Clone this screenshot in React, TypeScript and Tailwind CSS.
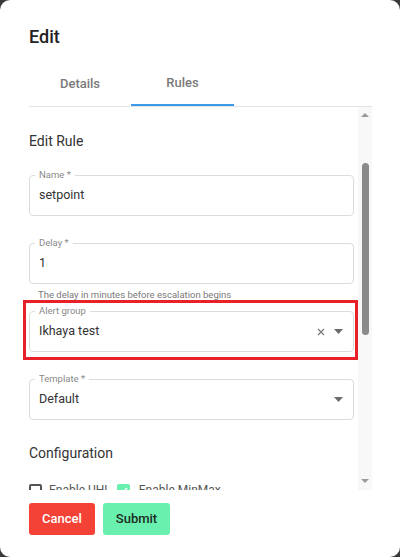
import { ReactNode } from "react";

function Field({ label, value, icons }: { label: string; value: string; icons?: ReactNode }) {
  return (
    <div className="relative h-[41px] rounded-[4px] border border-[#dcdcdc] flex items-center pl-[9px] pr-[10px]">
      <span className="absolute -top-[7px] left-[5px] bg-white px-[4px] text-[9.5px] leading-[12px] text-[#8a8a8a]">
        {label}
      </span>
      <span className="flex-1 text-[12.5px] text-[#333]">{value}</span>
      {icons}
    </div>
  );
}

function Caret() {
  return (
    <svg width="9" height="5" viewBox="0 0 9 5" className="ml-[9px]">
      <path d="M0 0h9L4.5 5z" fill="#6b6b6b" />
    </svg>
  );
}

export default function App() {
  return (
    <div className="w-[400px] h-[557px] bg-[#3a3a3a]" style={{ fontFamily: "Roboto, 'Liberation Sans', sans-serif" }}>
      <div className="w-full h-full bg-white rounded-[10px] flex flex-col">
        <h2 className="pt-[24px] pl-[29px] text-[18px] leading-[26px] font-medium text-[#222]">Edit</h2>

        <div className="mt-[8px] ml-[29px] flex h-[48px]">
          <div className="w-[102px] flex items-center justify-center pt-[4px] text-[13px] font-medium text-[#7a7a7a]">Details</div>
          <div className="w-[103px] flex items-center justify-center pt-[4px] text-[13px] font-medium text-[#7a7a7a] border-b-2 border-[#3d9be9]">
            Rules
          </div>
        </div>

        <div className="ml-[23px] w-[349px] flex flex-col">
          <div className="ml-[6px] h-px bg-[#e3e3e3]" />
          <div className="flex h-[383px]">
            <div className="flex-1 overflow-hidden">
              <div className="pl-[6px] pr-[4px] pt-[24px]">
                <h3 className="text-[14px] leading-[20px] text-[#333]">Edit Rule</h3>
                <div className="mt-[24px]">
                  <Field label="Name *" value="setpoint" />
                </div>
                <div className="mt-[27px]">
                  <Field label="Delay *" value="1" />
                </div>
                <p className="mt-[5px] pl-[9px] text-[9.5px] leading-[12px] text-[#7a7a7a]">
                  The delay in minutes before escalation begins
                </p>
              </div>

              <div className="mt-[-1px] border-[3px] border-[#e8202a] pl-[3px] pr-[1px] pt-[8px] pb-[5px]">
                <Field
                  label="Alert group"
                  value="Ikhaya test"
                  icons={
                    <>
                      <svg width="8" height="8" viewBox="0 0 8 8">
                        <path d="M1 1l6 6M7 1L1 7" stroke="#7a7a7a" strokeWidth="1.3" />
                      </svg>
                      <Caret />
                    </>
                  }
                />
              </div>

              <div className="pl-[6px] pr-[4px]">
                <div className="mt-[19px]">
                  <Field label="Template *" value="Default" icons={<Caret />} />
                </div>
                <h3 className="mt-[23px] text-[14px] leading-[20px] text-[#333]">Configuration</h3>
                <div className="mt-[20px] flex items-center text-[12px] leading-[14px] text-[#555]">
                  <span className="w-[13px] h-[13px] rounded-[2px] border-2 border-[#555]" />
                  <span className="ml-[7px]">Enable UHL</span>
                  <span className="ml-[6px] w-[13px] h-[13px] rounded-[2px] bg-[#69f0ae] flex items-center justify-center">
                    <svg width="9" height="9" viewBox="0 0 9 9">
                      <path d="M1 4.5l2.3 2.3L8 2" stroke="#fff" strokeWidth="1.6" fill="none" />
                    </svg>
                  </span>
                  <span className="ml-[9px]">Enable MinMax</span>
                </div>
              </div>
            </div>

            <div className="w-[14px] bg-[#f8f8f8] flex flex-col items-center">
              <svg width="8" height="4" viewBox="0 0 8 4" className="mt-[6px]">
                <path d="M0 4h8L4 0z" fill="#9a9a9a" />
              </svg>
              <div className="mt-[46px] w-[7px] h-[172px] rounded-full bg-[#8a8a8a]" />
              <div className="flex-1" />
              <svg width="8" height="4" viewBox="0 0 8 4" className="mb-[7px]">
                <path d="M0 0h8L4 4z" fill="#9a9a9a" />
              </svg>
            </div>
          </div>
        </div>

        <div className="mt-[13px] ml-[29px] flex gap-[8px]">
          <button className="w-[66px] h-[32px] rounded-[3px] bg-[#f44336] text-white text-[13px] font-medium">Cancel</button>
          <button className="w-[67px] h-[32px] rounded-[3px] bg-[#69f0ae] text-[#1d2b24] text-[13px] font-medium">Submit</button>
        </div>
      </div>
    </div>
  );
}
